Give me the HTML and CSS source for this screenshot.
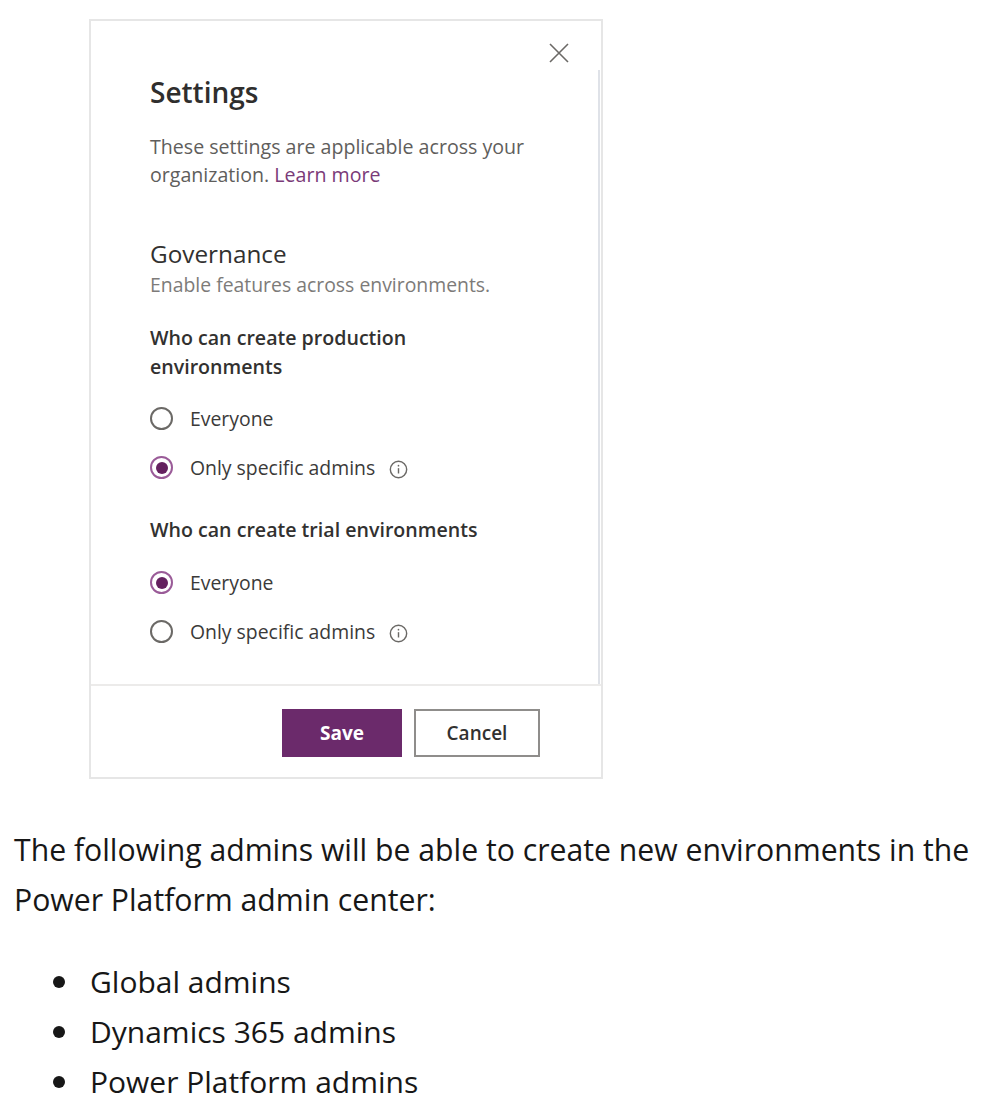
FILE: index.html
```html
<!DOCTYPE html>
<html lang="en">
<head>
<meta charset="utf-8">
<title>Settings</title>
<link rel="stylesheet" href="styles.css">
</head>
<body>
<div class="dialog">
  <div class="dialog-header">
    <button class="close" aria-label="Close">
      <svg width="20" height="20" viewBox="0 0 20 20"><path d="M1 1 L19 19 M19 1 L1 19" stroke="#6b6966" stroke-width="1.6" fill="none"/></svg>
    </button>
  </div>
  <div class="scroll">
    <h1 class="title">Settings</h1>
    <p class="desc">These settings are applicable across your organization. <span class="link">Learn more</span></p>
    <h2 class="section">Governance</h2>
    <p class="subdesc">Enable features across environments.</p>
    <div class="group-label">Who can create production<br>environments</div>
    <div class="radio-row"><span class="radio"></span><span class="radio-label">Everyone</span></div>
    <div class="radio-row"><span class="radio checked"></span><span class="radio-label">Only specific admins</span><span class="info"><svg width="19" height="19" viewBox="0 0 20 20"><circle cx="10" cy="10" r="8.6" stroke="#6b6966" stroke-width="1.5" fill="none"/><path d="M10 8.6 V14.2" stroke="#6b6966" stroke-width="1.5"/><circle cx="10" cy="6" r="0.9" fill="#6b6966"/></svg></span></div>
    <div class="group-label second">Who can create trial environments</div>
    <div class="radio-row"><span class="radio checked"></span><span class="radio-label">Everyone</span></div>
    <div class="radio-row"><span class="radio"></span><span class="radio-label">Only specific admins</span><span class="info"><svg width="19" height="19" viewBox="0 0 20 20"><circle cx="10" cy="10" r="8.6" stroke="#6b6966" stroke-width="1.5" fill="none"/><path d="M10 8.6 V14.2" stroke="#6b6966" stroke-width="1.5"/><circle cx="10" cy="6" r="0.9" fill="#6b6966"/></svg></span></div>
  </div>
  <div class="footer">
    <button class="btn primary">Save</button>
    <button class="btn secondary">Cancel</button>
  </div>
</div>
<p class="text">The following admins will be able to create new environments in the Power Platform admin center:</p>
<ul class="list">
  <li>Global admins</li>
  <li>Dynamics 365 admins</li>
  <li>Power Platform admins</li>
</ul>
</body>
</html>
```

FILE: styles.css
```css
* { box-sizing: border-box; }
html, body { margin: 0; padding: 0; background: #ffffff; }
body {
  font-family: "Open Sans", "Noto Sans", "Liberation Sans", sans-serif;
  color: #171717;
}
.dialog {
  margin: 19px 0 0 89px;
  width: 514px;
  height: 760px;
  border: 2px solid #e6e6e6;
  display: flex;
  flex-direction: column;
  background: #fff;
}
.dialog-header {
  height: 49px;
  display: flex;
  justify-content: flex-end;
  align-items: flex-start;
  padding: 22px 32px 0 0;
}
.close {
  width: 20px; height: 20px;
  padding: 0; margin: 0;
  border: 0; background: none;
  display: block;
}
.close svg { display: block; }
.scroll {
  flex: 1;
  margin-right: 1px;
  border-right: 2px solid #dfe2e8;
  padding: 5px 0 0 59px;
  color: #323130;
}
.title {
  margin: 0;
  font-size: 28px;
  line-height: 34px;
  font-weight: 600;
  color: #2f2e2d;
}
.desc {
  margin: 24px 0 0;
  width: 400px;
  font-size: 19.6px;
  line-height: 28px;
  color: #5f5e5c;
}
.link { color: #7a3a78; }
.section {
  margin: 50px 0 0;
  font-size: 24.3px;
  line-height: 30px;
  font-weight: 400;
  color: #323130;
}
.subdesc {
  margin: 3px 0 0;
  font-size: 19.4px;
  line-height: 26px;
  color: #7d7b79;
}
.group-label {
  margin-top: 25px;
  font-size: 19.6px;
  line-height: 29px;
  font-weight: 600;
  color: #323130;
}
.group-label.second { margin-top: 23px; }
.radio-row {
  height: 49px;
  display: flex;
  align-items: center;
}
.group-label + .radio-row { margin-top: 13px; }
.group-label.second + .radio-row { margin-top: 14px; }
.radio {
  width: 23px; height: 23px;
  border: 2px solid #6b6966;
  border-radius: 50%;
  display: flex;
  align-items: center;
  justify-content: center;
  flex: none;
}
.radio.checked { border-color: #9a5b98; }
.radio.checked::after {
  content: "";
  width: 12px; height: 12px;
  border-radius: 50%;
  background: #64215f;
}
.radio-label {
  margin-left: 17px;
  font-size: 19.4px;
  color: #3b3a39;
}
.info {
  margin-left: 14px;
  margin-top: 4px;
  display: flex;
}
.footer {
  height: 93px;
  border-top: 2px solid #ecebea;
  display: flex;
  justify-content: flex-end;
  align-items: flex-start;
  padding: 23px 61px 0 0;
  gap: 12px;
}
.btn {
  height: 48px;
  font-family: inherit;
  font-size: 19px;
  font-weight: 700;
  margin: 0;
  padding: 0;
}
.primary {
  width: 120px;
  background: #6b2a6b;
  color: #fff;
  border: 0;
}
.secondary {
  width: 126px;
  background: #fff;
  color: #323130;
  border: 2px solid #8f8d8b;
  font-weight: 600;
}
.text {
  margin: 46px 0 0 14px;
  width: 975px;
  font-size: 30.2px;
  line-height: 50px;
  color: #171717;
}
.list {
  list-style: none;
  margin: 32px 0 0;
  padding: 0 0 0 53px;
}
.list li {
  display: flex;
  align-items: center;
  font-size: 30px;
  line-height: 50px;
  color: #171717;
}
.list li::before {
  content: "";
  width: 12px; height: 12px;
  border-radius: 50%;
  background: #171717;
  margin-right: 25px;
  flex: none;
}
```
